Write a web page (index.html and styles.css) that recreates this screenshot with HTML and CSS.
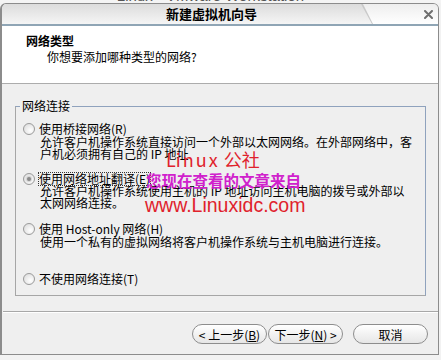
FILE: index.html
```html
<!DOCTYPE html>
<html lang="zh-CN">
<head>
    <meta charset="UTF-8">
    <title>新建虚拟机向导</title>
    <link rel="stylesheet" href="styles.css">
</head>
<body>
    <div class="desk"><span class="desk-title">Linux - VMware Workstation</span></div>

    <div class="window">
        <div class="titlebar">
            <div class="title">新建虚拟机向导</div>
            <div class="close">
                <svg width="9" height="9" viewBox="0 0 9 9">
                    <path d="M1 1 L8 8 M8 1 L1 8" stroke="#6e6e6e" stroke-width="2" stroke-linecap="round"/>
                </svg>
            </div>
        </div>

        <div class="header">
            <div class="header-title">网络类型</div>
            <div class="header-sub">你想要添加哪种类型的网络?</div>
        </div>

        <div class="body">
            <fieldset class="group">
                <legend>网络连接</legend>
                <div class="options">
                    <div class="option">
                        <div class="option-label"><span class="radio"></span><span>使用桥接网络(R)</span></div>
                        <div class="option-desc">允许客户机操作系统直接访问一个外部以太网网络。在外部网络中，客<br>户机必须拥有自己的 IP 地址</div>
                    </div>
                    <div class="option">
                        <div class="option-label"><span class="radio checked"></span><span class="focus">使用网络地址翻译(E)</span></div>
                        <div class="option-desc">允许客户机操作系统使用主机的 IP 地址访问主机电脑的拨号或外部以<br>太网网络连接。</div>
                    </div>
                    <div class="option">
                        <div class="option-label"><span class="radio"></span><span>使用 Host-only 网络(H)</span></div>
                        <div class="option-desc">使用一个私有的虚拟网络将客户机操作系统与主机电脑进行连接。</div>
                    </div>
                    <div class="option option-last">
                        <div class="option-label"><span class="radio"></span><span>不使用网络连接(T)</span></div>
                    </div>
                </div>
            </fieldset>

            <div class="sep"></div>

            <div class="buttons">
                <button class="btn">&lt; 上一步(<u>B</u>)</button>
                <button class="btn btn-next">下一步(<u>N</u>) &gt;</button>
                <button class="btn btn-cancel">取消</button>
            </div>
        </div>

        <!-- watermark stamped over the dialog -->
        <div class="wm wm-site">L<span class="wm-spaced">inux</span> 公社</div>
        <div class="wm wm-note">您现在查看的文章来自</div>
        <div class="wm wm-url">www.Linuxidc.com</div>
    </div>
</body>
</html>
```

FILE: styles.css
```css
body {
    margin: 0;
    background: #f2f2f2;
    font-family: "Noto Sans CJK SC", "Noto Sans", sans-serif;
    font-size: 12px;
    color: #000;
}

.desk {
    height: 3px;
    overflow: hidden;
    text-align: center;
    background: #f4f4f4;
}

.desk-title {
    display: block;
    margin-top: -11px;
    margin-left: -20px;
    font-family: "Liberation Sans", sans-serif;
    font-size: 15px;
    line-height: 14px;
    color: #555;
}

.window {
    position: relative;
    width: 436px;
    border: 1px solid #8c8c8c;
    border-left-width: 2px;
    border-radius: 6px 6px 0 0;
    background: #efefef;
}

.titlebar {
    position: relative;
    height: 20px;
    display: flex;
    align-items: center;
    background: linear-gradient(#dcdcdc, #f5f5f5);
    border-bottom: 2px solid #8fa5b5;
    border-radius: 5px 5px 0 0;
}

.titlebar::before,
.titlebar::after {
    content: "";
    position: absolute;
    top: 0;
    right: 0;
    bottom: 0;
    width: 75px;
    border-radius: 0 5px 0 0;
}

.titlebar::before {
    width: 77px;
    background: #c9c9c9;
    clip-path: polygon(0 0, 100% 0, 100% 100%, 11px 100%);
}

.titlebar::after {
    background: linear-gradient(#eeeeee, #ffffff);
    clip-path: polygon(0 0, 100% 0, 100% 100%, 10px 100%);
}

.title {
    position: relative;
    z-index: 1;
    flex: 1;
    padding-right: 3px;
    text-align: center;
    font-size: 13px;
    font-weight: bold;
    line-height: 20px;
}

.close {
    position: relative;
    z-index: 1;
    width: 9px;
    height: 9px;
    margin-right: 5px;
}

.close svg {
    display: block;
}

.header {
    height: 49px;
    padding: 8px 0 0 24px;
    background: #fff;
    border-bottom: 1px solid #acacac;
}

.header-title {
    font-weight: bold;
    line-height: 14px;
}

.header-sub {
    margin-top: 2px;
    padding-left: 21px;
    line-height: 14px;
}

.body {
    padding-bottom: 10px;
}

.group {
    box-sizing: border-box;
    width: 411px;
    margin: 15px 0 0 13px;
    padding: 9px 0 9px 0;
    border: 1px solid;
    border-color: #8fa2bd #8fa2bd #a6a6a6 #a6a6a6;
}

.group legend {
    margin-left: 4px;
    padding: 0 2px;
    line-height: 14px;
}

.options {
    display: flex;
    flex-direction: column;
    gap: 13px;
    margin-left: 7px;
}

.option-last {
    margin-top: 11px;
}

.option-label {
    display: flex;
    align-items: center;
    gap: 4px;
    line-height: 14px;
}

.option-desc {
    padding-left: 17px;
    line-height: 12px;
}

.radio {
    position: relative;
    box-sizing: border-box;
    width: 12px;
    height: 12px;
    border: 1px solid #9a9a9a;
    border-radius: 50%;
    background: radial-gradient(circle at 65% 65%, #ffffff, #d8d8d8);
    flex-shrink: 0;
}

.radio.checked::after {
    content: "";
    position: absolute;
    left: 3px;
    top: 3px;
    width: 4px;
    height: 4px;
    border-radius: 50%;
    background: #8a8a8a;
    box-shadow: 0 0 1px 1px #d0d0d0;
}

.focus {
    outline: 1px dotted #333;
    line-height: 12px;
}

.sep {
    margin: 15px 0 0 1px;
    border-top: 1px solid #a8a8a8;
    border-bottom: 1px solid #fff;
}

.buttons {
    display: flex;
    justify-content: flex-end;
    margin-top: 11px;
    padding-right: 10px;
}

.btn {
    box-sizing: border-box;
    width: 75px;
    height: 20px;
    padding: 0;
    border: 1px solid #8d8d8d;
    border-radius: 10px;
    background: linear-gradient(#ffffff, #e6e6e6);
    font-family: "Noto Sans CJK SC", "Noto Sans", sans-serif;
    font-size: 12px;
    color: #000;
}

.btn-next {
    margin-left: 1px;
}

.btn-cancel {
    margin-left: 10px;
}

.wm {
    position: absolute;
    white-space: nowrap;
}

.wm-site {
    left: 164px;
    top: 146px;
    font-size: 18px;
    line-height: 18px;
    color: #e0222c;
}

.wm-spaced {
    letter-spacing: 2px;
}

.wm-note {
    left: 144px;
    top: 168px;
    font-size: 15.5px;
    line-height: 16px;
    font-weight: bold;
    color: #d021cc;
}

.wm-url {
    left: 143px;
    top: 191px;
    font-family: "Liberation Sans", sans-serif;
    font-size: 19.5px;
    line-height: 20px;
    color: #e0222c;
}
```
